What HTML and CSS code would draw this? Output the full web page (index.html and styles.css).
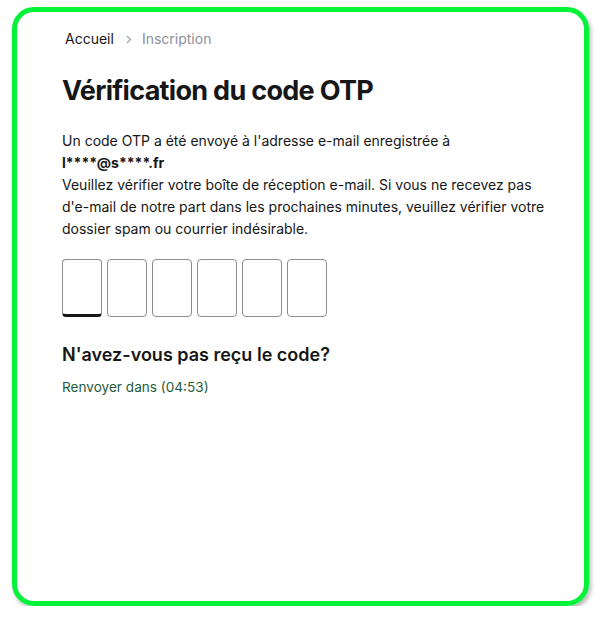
FILE: index.html
```html
<!DOCTYPE html>
<html lang="fr">
<head>
<meta charset="utf-8">
<title>Vérification du code OTP</title>
<link rel="stylesheet" href="styles.css">
</head>
<body>
<main class="frame">
  <nav class="crumbs">
    <a class="crumb" href="#">Accueil</a>
    <svg class="sep" width="6" height="9" viewBox="0 0 6 9" aria-hidden="true"><path d="M1 1l3.5 3.5L1 8" fill="none" stroke="#9aa0a8" stroke-width="1.1"/></svg>
    <span class="crumb current">Inscription</span>
  </nav>
  <h1 class="title">Vérification du code OTP</h1>
  <p class="intro">Un code OTP a été envoyé à l'adresse e-mail enregistrée à<br><strong>l****@s****.fr</strong><br>Veuillez vérifier votre boîte de réception e-mail. Si vous ne recevez pas d'e-mail de notre part dans les prochaines minutes, veuillez vérifier votre dossier spam ou courrier indésirable.</p>
  <div class="otp">
    <input class="digit active" type="text" maxlength="1" aria-label="Chiffre 1">
    <input class="digit" type="text" maxlength="1" aria-label="Chiffre 2">
    <input class="digit" type="text" maxlength="1" aria-label="Chiffre 3">
    <input class="digit" type="text" maxlength="1" aria-label="Chiffre 4">
    <input class="digit" type="text" maxlength="1" aria-label="Chiffre 5">
    <input class="digit" type="text" maxlength="1" aria-label="Chiffre 6">
  </div>
  <h2 class="subtitle">N'avez-vous pas reçu le code?</h2>
  <p class="resend">Renvoyer dans (04:53)</p>
</main>
</body>
</html>
```
FILE: styles.css
```css
html, body {
  margin: 0;
  padding: 0;
  background: #ffffff;
}
body {
  font-family: Inter, "Noto Sans", "Liberation Sans", sans-serif;
  color: #161616;
}
.frame {
  box-sizing: border-box;
  width: 577px;
  height: 599px;
  margin: 7px 0 0 12px;
  border: 5px solid #05f23a;
  border-radius: 22px;
  box-shadow: 2px 3px 4px rgba(0, 0, 0, 0.28);
  padding: 17px 45px 0 45px;
  display: flex;
  flex-direction: column;
}
.crumbs {
  display: flex;
  align-items: center;
  font-size: 14px;
  line-height: 20px;
  padding-left: 3px;
  height: 20px;
}
.crumb {
  color: #161616;
  text-decoration: none;
}
.sep {
  display: block;
  margin: 0 10px 0 12px;
}
.current {
  color: #8c9099;
}
.title {
  margin: 24px 0 0 0;
  font-size: 27px;
  line-height: 36px;
  font-weight: 700;
  letter-spacing: -0.7px;
}
.intro {
  margin: 21px 0 0 0;
  font-size: 14px;
  line-height: 22px;
  width: 500px;
}
.intro strong {
  font-weight: 700;
}
.otp {
  display: flex;
  gap: 5px;
  margin-top: 19px;
}
.digit {
  box-sizing: border-box;
  width: 40px;
  height: 58px;
  margin: 0;
  border: 1px solid #8d8d93;
  border-radius: 4px;
  background: #ffffff;
  padding: 0;
  font: inherit;
  text-align: center;
}
.digit.active {
  border-bottom: 3px solid #161616;
}
.subtitle {
  margin: 25px 0 0 0;
  font-size: 18px;
  line-height: 26px;
  font-weight: 600;
}
.resend {
  margin: 9px 0 0 0;
  font-size: 13.6px;
  line-height: 20px;
  color: #1d5c3b;
}
```
